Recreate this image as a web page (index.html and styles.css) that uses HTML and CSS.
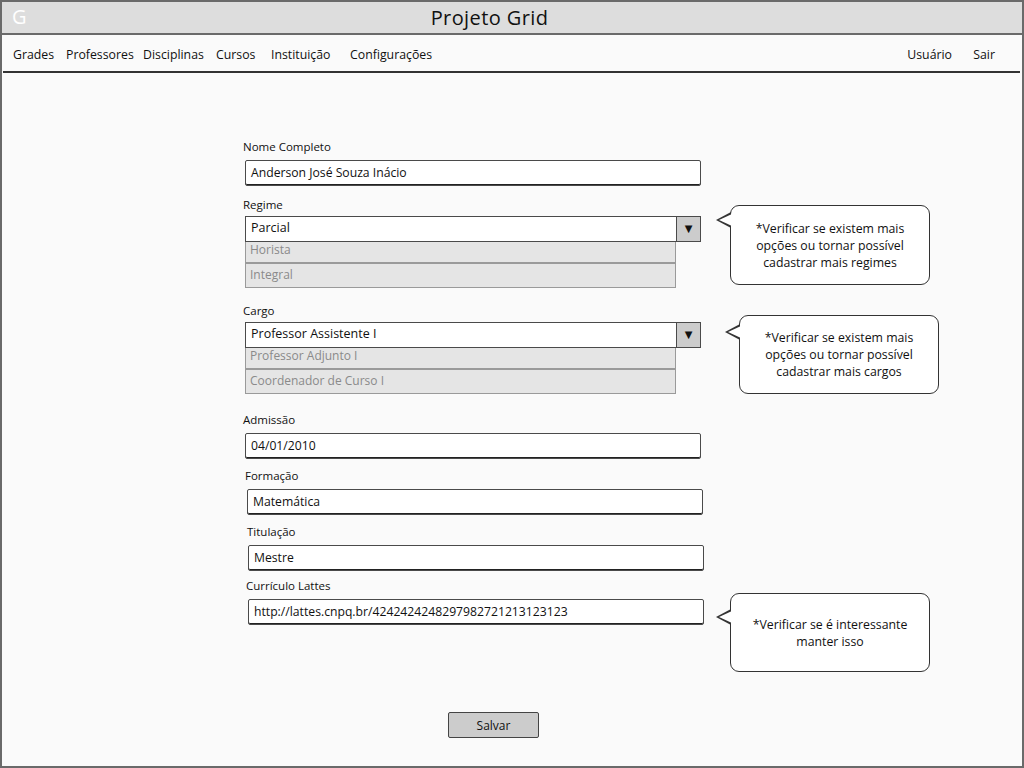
FILE: index.html
```html
<!DOCTYPE html>
<html lang="pt">
<head>
<meta charset="utf-8">
<title>Projeto Grid</title>
<link rel="stylesheet" href="styles.css">
</head>
<body>
<div class="window">
  <header class="titlebar">
    <span class="logo">G</span>
    <h1 class="title">Projeto Grid</h1>
  </header>
  <nav class="nav">
    <ul class="menu">
      <li class="m-grades">Grades</li>
      <li class="m-prof">Professores</li>
      <li class="m-disc">Disciplinas</li>
      <li class="m-cursos">Cursos</li>
      <li class="m-inst">Instituição</li>
      <li class="m-conf">Configurações</li>
    </ul>
    <ul class="menu menu-right">
      <li class="m-user">Usuário</li>
      <li class="m-sair">Sair</li>
    </ul>
  </nav>

  <main class="form">
    <div class="field f-nome">
      <div class="label">Nome Completo</div>
      <div class="input">Anderson José Souza Inácio</div>
    </div>

    <div class="field f-regime">
      <div class="label">Regime</div>
      <div class="select">
        <div class="select-value">Parcial</div>
        <div class="select-btn">▼</div>
      </div>
      <div class="options">
        <div class="option">Horista</div>
        <div class="option">Integral</div>
      </div>
      <div class="note note-1">*Verificar se existem mais opções ou tornar possível cadastrar mais regimes</div>
    </div>

    <div class="field f-cargo">
      <div class="label">Cargo</div>
      <div class="select">
        <div class="select-value">Professor Assistente I</div>
        <div class="select-btn">▼</div>
      </div>
      <div class="options">
        <div class="option">Professor Adjunto I</div>
        <div class="option">Coordenador de Curso I</div>
      </div>
      <div class="note note-2">*Verificar se existem mais opções ou tornar possível cadastrar mais cargos</div>
    </div>

    <div class="field f-adm">
      <div class="label">Admissão</div>
      <div class="input">04/01/2010</div>
    </div>

    <div class="field f-form shift-2">
      <div class="label">Formação</div>
      <div class="input">Matemática</div>
    </div>

    <div class="field f-tit shift-3">
      <div class="label">Titulação</div>
      <div class="input">Mestre</div>
    </div>

    <div class="field f-lattes shift-3">
      <div class="label">Currículo Lattes</div>
      <div class="input">http://lattes.cnpq.br/4242424248297982721213123123</div>
      <div class="note note-3">*Verificar se é interessante manter isso</div>
    </div>

    <div class="actions">
      <button class="btn" type="button">Salvar</button>
    </div>
  </main>
</div>
</body>
</html>
```

FILE: styles.css
```css
* { box-sizing: border-box; }

html, body {
  margin: 0;
  padding: 0;
  background: #fafafa;
}

body {
  font-family: "Open Sans", "DejaVu Sans", sans-serif;
  color: #222;
}

.window {
  width: 1024px;
  height: 768px;
  border: 2px solid #6a6a6a;
  background: #fafafa;
  display: flex;
  flex-direction: column;
}

/* Title bar */
.titlebar {
  height: 33px;
  flex: none;
  background: #dddddd;
  border-bottom: 2px solid #6a6a6a;
  display: flex;
  align-items: center;
  justify-content: center;
  position: relative;
}

.logo {
  position: absolute;
  left: 10px;
  top: 1px;
  color: #ffffff;
  font-size: 20px;
  line-height: 28px;
}

.title {
  margin: 0 0 0 -45px;
  font-weight: normal;
  font-size: 20px;
  color: #111;
  letter-spacing: 0.4px;
}

/* Nav */
.nav {
  height: 38px;
  flex: none;
  margin: 0 2px 0 1px;
  border-bottom: 2px solid #333;
  display: flex;
  justify-content: space-between;
  align-items: center;
  padding-top: 2px;
}

.menu {
  list-style: none;
  margin: 0;
  padding: 0;
  display: flex;
  font-size: 12.3px;
  color: #111;
}

.menu li { white-space: nowrap; }

.m-grades { margin-left: 10px; width: 53px; }
.m-prof { width: 77px; }
.m-disc { width: 73px; }
.m-cursos { width: 55px; }
.m-inst { width: 79px; }

.menu-right { margin-right: 25px; }
.m-user { width: 66px; }

/* Form */
.form {
  flex: 1;
  padding: 66px 0 0 241px;
  display: flex;
  flex-direction: column;
  align-items: flex-start;
}

.field {
  position: relative;
  width: 460px;
}

.label {
  font-size: 11.5px;
  line-height: 16px;
  height: 16px;
  color: #111;
  margin-bottom: 5px;
}

.input {
  width: 456px;
  height: 26px;
  margin-left: 2px;
  background: #fff;
  border: 1.5px solid #4a4a4a;
  border-radius: 2px;
  font-size: 12.2px;
  line-height: 23px;
  padding-left: 5px;
  color: #111;
  box-shadow: inset 0 -1px 0 #222;
}

.f-regime { margin-top: 11px; }
.f-cargo { margin-top: 15px; }
.f-adm { margin-top: 18px; }
.f-form { margin-top: 9px; }
.f-tit { margin-top: 9px; }
.f-lattes { margin-top: 7px; }

.shift-2 .label { margin-left: 2px; }
.shift-2 .input { margin-left: 4px; }
.shift-3 .label { margin-left: 4px; }
.shift-3 .input { margin-left: 5px; }
.f-lattes .label { margin-left: 3px; }

.f-regime .label, .f-cargo .label { margin-bottom: 3px; }

/* Select */
.select {
  width: 456px;
  height: 26px;
  margin-left: 2px;
  display: flex;
  position: relative;
  z-index: 1;
}

.select-value {
  flex: 1;
  background: #fff;
  border: 1.5px solid #4a4a4a;
  border-right: none;
  font-size: 12.5px;
  line-height: 22px;
  padding-left: 5px;
  color: #111;
}

.select-btn {
  width: 25px;
  background: #cccccc;
  border: 1.5px solid #4a4a4a;
  font-size: 10px;
  line-height: 22px;
  text-align: center;
  color: #111;
}

.options {
  margin-left: 2px;
  margin-top: -4px;
  width: 431px;
}

.option {
  height: 25px;
  background: #e5e5e5;
  border: 1px solid #9a9a9a;
  font-size: 12px;
  line-height: 22px;
  padding-left: 4px;
  color: #8a8a8a;
}

/* Callouts */
.note {
  position: absolute;
  width: 200px;
  height: 80px;
  background: #fff;
  border: 1.5px solid #333;
  border-radius: 9px;
  font-size: 12.3px;
  line-height: 17px;
  color: #111;
  text-align: center;
  display: flex;
  align-items: center;
  justify-content: center;
  padding: 0 12px;
}

.note::before,
.note::after {
  content: "";
  position: absolute;
  width: 0;
  height: 0;
  border-style: solid;
}

.note::before {
  left: -15px;
  top: var(--tip-top, 6px);
  border-width: 8px 15px 8px 0;
  border-color: transparent #333 transparent transparent;
}

.note::after {
  left: -12.5px;
  top: calc(var(--tip-top, 6px) + 1.5px);
  border-width: 6.5px 13px 6.5px 0;
  border-color: transparent #fff transparent transparent;
}

.note-1 { left: 487px; top: 8px; --tip-top: 6px; }
.note-2 { left: 496px; top: 12px; --tip-top: 8px; height: 79px; }
.note-3 { left: 487px; top: 15px; height: 79px; --tip-top: 15px; }

/* Button */
.actions {
  width: 460px;
  margin-top: 87px;
  display: flex;
  justify-content: center;
}

.btn {
  margin-left: 41px;
  width: 91px;
  height: 26px;
  background: #cccccc;
  border: 1.5px solid #444;
  border-radius: 2px;
  font-family: inherit;
  font-size: 12px;
  color: #111;
  padding: 0;
}
```
